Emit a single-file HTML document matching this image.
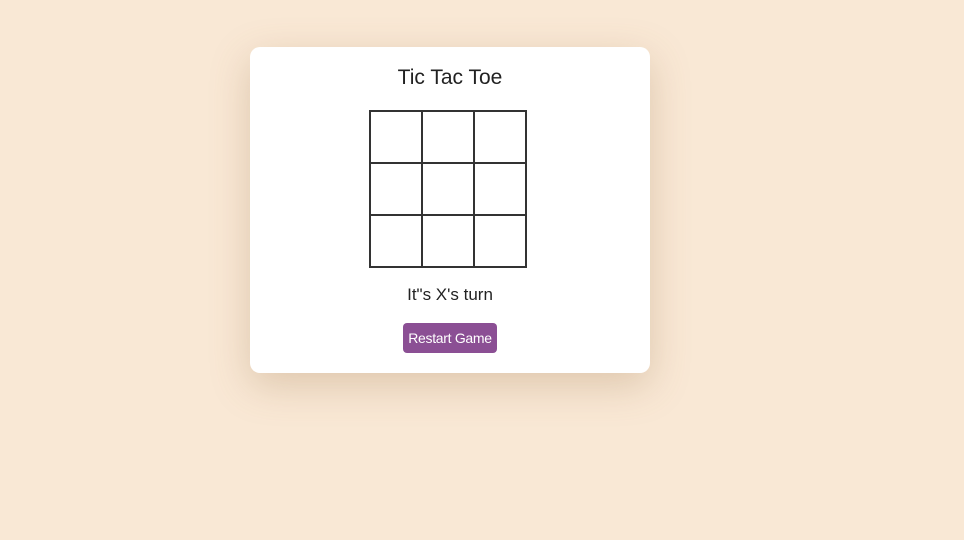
<!DOCTYPE html>
<html><head><style>
html,body{margin:0;padding:0;width:964px;height:540px;background:#f9e8d5;overflow:hidden;font-family:"Liberation Sans",sans-serif}
.card{position:absolute;left:250px;top:47px;width:400px;height:326px;background:#fff;border-radius:10px;box-shadow:0 12px 40px rgba(150,110,70,0.28)}
.t{position:absolute;left:0;width:400px;text-align:center;color:#222}
.title{top:66px;font-size:21px;letter-spacing:0}
.grid{position:absolute;left:369px;top:110px;width:154px;height:154px;border:2px solid #333;background:#333;display:grid;grid-template-columns:50px 50px 50px;grid-template-rows:50px 50px 50px;gap:2px}
.grid div{background:#fff}
.status{top:285px;font-size:17px}
.btn{position:absolute;left:403px;top:323px;width:94px;height:30px;background:#8b4f94;border-radius:4px;color:#fff;font-size:14px;line-height:30px;text-align:center;letter-spacing:-0.3px}
</style></head><body>
<div class="card"></div>
<div class="t title" style="left:250px">Tic Tac Toe</div>
<div class="grid"><div></div><div></div><div></div><div></div><div></div><div></div><div></div><div></div><div></div></div>
<div class="t status" style="left:250px">It"s X's turn</div>
<div class="btn">Restart Game</div>
</body></html>
